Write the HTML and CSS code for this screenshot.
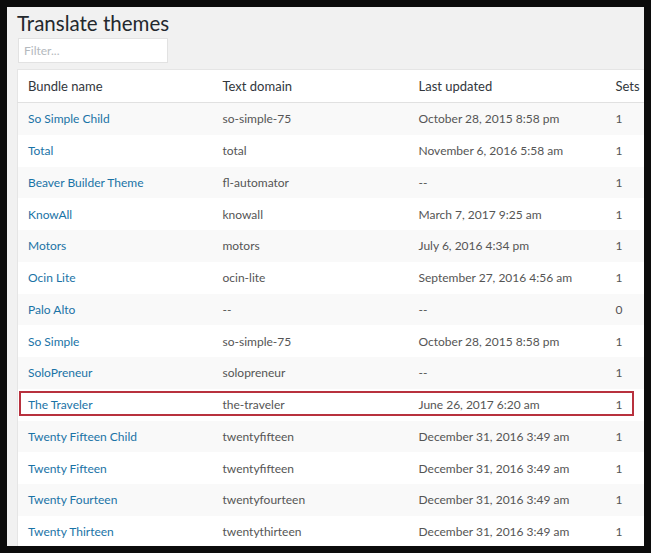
FILE: index.html
```html
<!DOCTYPE html>
<html lang="en">
<head>
<meta charset="utf-8">
<title>Translate themes</title>
<link rel="stylesheet" href="styles.css">
</head>
<body>
<div class="frame">
  <div class="wrap">
    <h1 class="title">Translate themes</h1>
    <input class="filter" type="text" placeholder="Filter...">
    <table class="themes">
      <colgroup>
        <col class="c-name"><col class="c-domain"><col class="c-date"><col class="c-sets">
      </colgroup>
      <thead>
        <tr><th>Bundle name</th><th>Text domain</th><th>Last updated</th><th>Sets</th></tr>
      </thead>
      <tbody>
        <tr><td><a href="#">So Simple Child</a></td><td>so-simple-75</td><td>October 28, 2015 8:58 pm</td><td>1</td></tr>
        <tr><td><a href="#">Total</a></td><td>total</td><td>November 6, 2016 5:58 am</td><td>1</td></tr>
        <tr><td><a href="#">Beaver Builder Theme</a></td><td>fl-automator</td><td>--</td><td>1</td></tr>
        <tr><td><a href="#">KnowAll</a></td><td>knowall</td><td>March 7, 2017 9:25 am</td><td>1</td></tr>
        <tr><td><a href="#">Motors</a></td><td>motors</td><td>July 6, 2016 4:34 pm</td><td>1</td></tr>
        <tr><td><a href="#">Ocin Lite</a></td><td>ocin-lite</td><td>September 27, 2016 4:56 am</td><td>1</td></tr>
        <tr><td><a href="#">Palo Alto</a></td><td>--</td><td>--</td><td>0</td></tr>
        <tr><td><a href="#">So Simple</a></td><td>so-simple-75</td><td>October 28, 2015 8:58 pm</td><td>1</td></tr>
        <tr><td><a href="#">SoloPreneur</a></td><td>solopreneur</td><td>--</td><td>1</td></tr>
        <tr><td><a href="#">The Traveler</a></td><td>the-traveler</td><td>June 26, 2017 6:20 am</td><td>1</td></tr>
        <tr><td><a href="#">Twenty Fifteen Child</a></td><td>twentyfifteen</td><td>December 31, 2016 3:49 am</td><td>1</td></tr>
        <tr><td><a href="#">Twenty Fifteen</a></td><td>twentyfifteen</td><td>December 31, 2016 3:49 am</td><td>1</td></tr>
        <tr><td><a href="#">Twenty Fourteen</a></td><td>twentyfourteen</td><td>December 31, 2016 3:49 am</td><td>1</td></tr>
        <tr><td><a href="#">Twenty Thirteen</a></td><td>twentythirteen</td><td>December 31, 2016 3:49 am</td><td>1</td></tr>
      </tbody>
    </table>
  </div>
  <div class="highlight"></div>
</div>
</body>
</html>
```
FILE: styles.css
```css
html, body {
  margin: 0;
  padding: 0;
  background: #0c0c0c;
  height: 100%;
}
body {
  padding: 7px;
  box-sizing: border-box;
  font-family: "Lato", "Open Sans", sans-serif;
  font-size: 13px;
  color: #555;
}
.frame {
  position: relative;
  width: 637px;
  height: 539px;
  background: #f1f1f1;
  overflow: hidden;
}
.wrap {
  padding: 0 0 0 10px;
  width: 700px;
}
.title {
  margin: 0;
  padding: 2px 0 0 0;
  font-size: 20.5px;
  line-height: 28px;
  font-weight: 400;
  color: #23282d;
}
.filter {
  display: block;
  margin: 1px 0 0 1px;
  width: 150px;
  height: 25px;
  box-sizing: border-box;
  border: 1px solid #e2e2e2;
  background: #fff;
  padding: 0 5px;
  font-family: inherit;
  font-size: 12px;
  color: #32373c;
  outline: none;
}
.filter::placeholder {
  color: #b4b9be;
}
.themes {
  margin-top: 6px;
  border-collapse: collapse;
  table-layout: fixed;
  width: 660px;
  background: #fff;
  border: 1px solid #e5e5e5;
}
.c-name { width: 195px; }
.c-domain { width: 196px; }
.c-date { width: 197px; }
.c-sets { width: 72px; }
.themes th {
  text-align: left;
  font-weight: 400;
  font-size: 13px;
  color: #32373c;
  height: 32px;
  padding: 0 10px;
  border-bottom: 1px solid #e1e1e1;
  white-space: nowrap;
}
.themes td {
  height: 31.75px;
  padding: 0 10px;
  white-space: nowrap;
  font-size: 12px;
  color: #555;
}
.themes tbody tr:nth-child(odd) {
  background: #f9f9f9;
}
.themes a {
  color: #1a73a6;
  text-decoration: none;
}
.highlight {
  position: absolute;
  left: 12px;
  top: 384px;
  width: 611px;
  height: 21px;
  border: 2px solid #b8313e;
  pointer-events: none;
}
```
